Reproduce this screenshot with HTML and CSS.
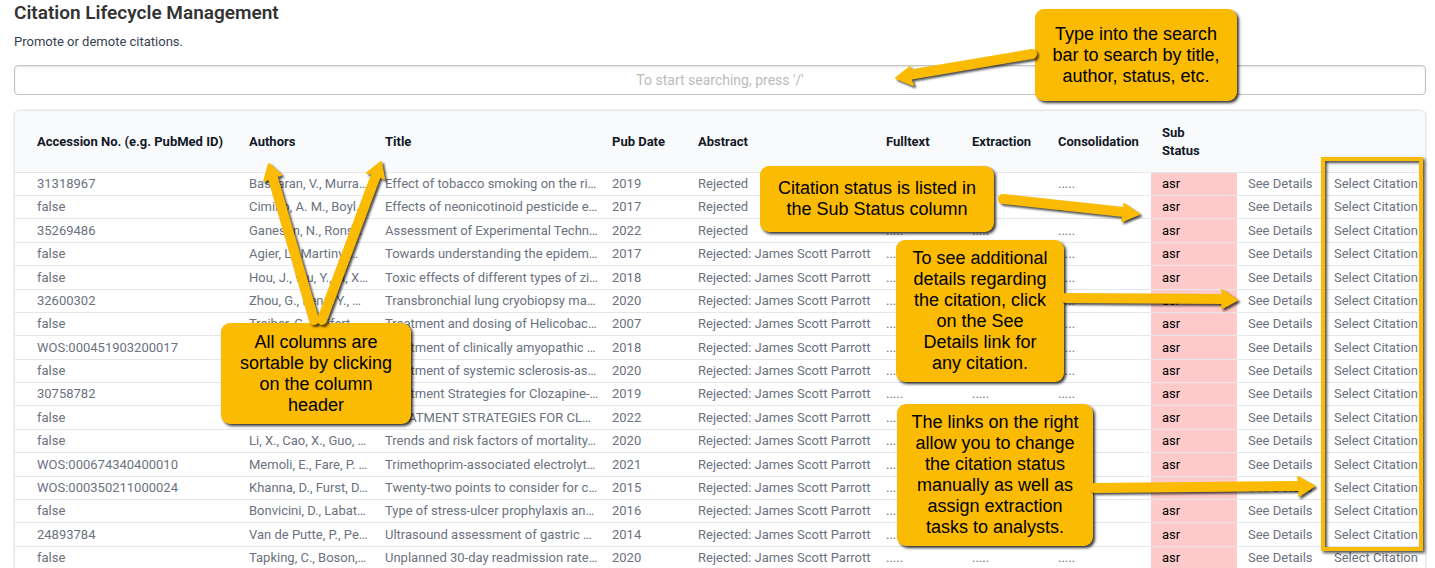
FILE: index.html
```html
<!DOCTYPE html>
<html lang="en">
<head>
<meta charset="utf-8">
<title>Citation Lifecycle Management</title>
<link rel="stylesheet" href="styles.css">
</head>
<body>
<main class="page">
  <h1 class="title">Citation Lifecycle Management</h1>
  <p class="subtitle">Promote or demote citations.</p>
  <input class="search" type="text" aria-label="Search citations" placeholder="To start searching, press '/'">
  <div class="panel">
    <table class="citations">
      <colgroup>
        <col class="col-accession"><col class="col-authors"><col class="col-title"><col class="col-small"><col class="col-abstract"><col class="col-small"><col class="col-small"><col class="col-consolidation"><col class="col-small"><col class="col-small"><col class="col-select">
      </colgroup>
      <thead>
        <tr><th>Accession No. (e.g. PubMed ID)</th><th>Authors</th><th>Title</th><th>Pub Date</th><th>Abstract</th><th>Fulltext</th><th>Extraction</th><th>Consolidation</th><th class="wrap">Sub Status</th><th></th><th></th></tr>
      </thead>
      <tbody id="rows"></tbody>
    </table>
  </div>

  <div class="highlight"></div>
  <div class="callout callout-search">Type into the search<br>bar to search by title,<br>author, status, etc.</div>
  <div class="callout callout-status">Citation status is listed in<br>the Sub Status column</div>
  <div class="callout callout-details">To see additional<br>details regarding<br>the citation, click<br>on the See<br>Details link for<br>any citation.</div>
  <div class="callout callout-links">The links on the right<br>allow you to change<br>the citation status<br>manually as well as<br>assign extraction<br>tasks to analysts.</div>
  <div class="callout callout-sort">All columns are<br>sortable by clicking<br>on the column<br>header</div>

  <svg class="arrows arrows-left" viewBox="0 0 440 568" aria-hidden="true">
    <g class="arrow"><path class="shaft" d="M314 320L273 178"/><path class="head" d="M269 164L264 181L272 177L281 175Z"/></g>
    <g class="arrow"><path class="shaft" d="M322 320L376 175"/><path class="head" d="M381 162L367 173L376 174L384 179Z"/></g>
  </svg>
  <svg class="arrows arrows-right" viewBox="860 0 575 568" aria-hidden="true">
    <g class="arrow"><path class="shaft" d="M1032 54L908 75"/><path class="head" d="M896 78L910 67L909 76L913 85Z"/></g>
    <g class="arrow"><path class="shaft" d="M1003 199L1124 212"/><path class="head" d="M1139 214L1124 204L1125 212L1122 221Z"/></g>
    <g class="arrow"><path class="shaft" d="M1066 298L1223 299"/><path class="head" d="M1237 300L1222 290L1223 299L1222 308Z"/></g>
    <g class="arrow"><path class="shaft" d="M1095 488L1300 486"/><path class="head" d="M1314 486L1298 477L1300 486L1299 496Z"/></g>
  </svg>
</main>
<script src="rows.js"></script>
</body>
</html>
```

FILE: rows.js
```js
const full = "Rejected: James Scott Parrott";
const citations = [
  ["31318967", "Baskaran, V., Murra…", "Effect of tobacco smoking on the ri…", "2019", "Rejected"],
  ["false", "Cimino, A. M., Boyl…", "Effects of neonicotinoid pesticide e…", "2017", "Rejected"],
  ["35269486", "Ganesan, N., Rons…", "Assessment of Experimental Techn…", "2022", "Rejected"],
  ["false", "Agier, L., Martiny, …", "Towards understanding the epidem…", "2017", full],
  ["false", "Hou, J., Wu, Y., Li, X…", "Toxic effects of different types of zi…", "2018", full],
  ["32600302", "Zhou, G., Feng, Y., …", "Transbronchial lung cryobiopsy ma…", "2020", full],
  ["false", "Treiber, G., Seifert, …", "Treatment and dosing of Helicobac…", "2007", full],
  ["WOS:000451903200017", "", "Treatment of clinically amyopathic …", "2018", full],
  ["false", "", "Treatment of systemic sclerosis-as…", "2020", full],
  ["30758782", "", "Treatment Strategies for Clozapine-…", "2019", full],
  ["false", "", "TREATMENT STRATEGIES FOR CL…", "2022", full],
  ["false", "Li, X., Cao, X., Guo, …", "Trends and risk factors of mortality…", "2020", full],
  ["WOS:000674340400010", "Memoli, E., Fare, P. …", "Trimethoprim-associated electrolyt…", "2021", full],
  ["WOS:000350211000024", "Khanna, D., Furst, D…", "Twenty-two points to consider for c…", "2015", full],
  ["false", "Bonvicini, D., Labat…", "Type of stress-ulcer prophylaxis an…", "2016", full],
  ["24893784", "Van de Putte, P., Pe…", "Ultrasound assessment of gastric …", "2014", full],
  ["false", "Tapking, C., Boson,…", "Unplanned 30-day readmission rate…", "2020", full]
];
document.getElementById("rows").innerHTML = citations.map(c =>
  "<tr>" + c.map(v => `<td>${v}</td>`).join("") +
  "<td>.....</td><td>.....</td><td>.....</td>" +
  '<td class="sub-status">asr</td>' +
  '<td><a href="#">See Details</a></td><td><a href="#">Select Citation</a></td></tr>'
).join("");
```

FILE: styles.css
```css
* { box-sizing: border-box; }
html { scrollbar-width: none; }
body {
  margin: 0;
  background: #fff;
  font-family: Roboto, "Liberation Sans", sans-serif;
  font-size: 13px;
  line-height: 18px;
  color: #374151;
}
.page { position: relative; padding: 0 9px 0 14px; }
.title {
  margin: 0;
  padding-top: 1px;
  font-size: 19px;
  line-height: 24px;
  font-weight: 600;
  color: #333;
}
.subtitle { margin: 8px 0 14px; }
.search {
  display: block;
  width: 100%;
  height: 30px;
  border: 1px solid #c4c4c4;
  border-radius: 4px;
  background: #fff;
  box-shadow: inset 0 1px 2px rgba(0, 0, 0, 0.12);
  font: 14px Roboto, "Liberation Sans", sans-serif;
  text-align: center;
  color: #333;
  appearance: none;
}
.search::placeholder { color: #bbb; }
.panel {
  margin-top: 15px;
  border: 1px solid #e5e7eb;
  border-radius: 6px 6px 0 0;
  box-shadow: 0 0 2px rgba(0, 0, 0, 0.18);
  overflow: hidden;
}
.citations {
  width: 100%;
  table-layout: fixed;
  border-collapse: separate;
  border-spacing: 0;
}
.col-accession { width: 223px; }
.col-authors { width: 136px; }
.col-small { width: 86px; }
.col-abstract { width: 188px; }
.col-consolidation { width: 104px; }
.col-select { width: 102px; }
.citations th {
  height: 61px;
  padding: 0 11px;
  background: #f9fafb;
  text-align: left;
  font-weight: 700;
  color: #111827;
  white-space: nowrap;
}
.citations th.wrap { white-space: normal; padding-right: 40px; }
.citations td {
  height: 23px;
  padding: 0 11px;
  border-top: 1px solid #e5e7eb;
  color: #6b7280;
  white-space: nowrap;
}
.citations tr:nth-child(8n+3) td,
.citations tr:nth-child(8n+5) td,
.citations tr:nth-child(8n) td { height: 24px; }
.citations th:first-child,
.citations td:first-child { padding-left: 22px; }
.citations .sub-status { background: #fecaca; color: #000; }
.citations a { color: inherit; text-decoration: none; }
.citations td:last-child { padding-right: 0; }

.highlight {
  position: absolute;
  top: 157px;
  right: 12px;
  width: 102px;
  height: 394px;
  border: 4px solid #fbbb03;
  box-shadow: 2px 2px 3px rgba(0, 0, 0, 0.7), inset 2px 2px 3px rgba(0, 0, 0, 0.7);
}
.callout {
  position: absolute;
  display: flex;
  align-items: center;
  justify-content: center;
  border-radius: 9px;
  background: #fbbb03;
  box-shadow: 2px 2px 3px rgba(0, 0, 0, 0.8);
  font-family: "Liberation Sans", Arial, sans-serif;
  font-size: 18px;
  line-height: 21px;
  text-align: center;
  white-space: nowrap;
  color: #000;
}
.callout-search { top: 9px; right: 198px; width: 202px; height: 92px; }
.callout-status { top: 166px; right: 441px; width: 234px; height: 66px; }
.callout-details { top: 240px; right: 371px; width: 168px; height: 142px; }
.callout-links { top: 404px; right: 342px; width: 196px; height: 142px; }
.callout-sort { top: 323px; left: 221px; width: 190px; height: 101px; }
.arrows { position: absolute; top: 0; height: 568px; pointer-events: none; }
.arrows-left { left: 0; width: 440px; }
.arrows-right { right: 0; width: 575px; }
.arrow { filter: drop-shadow(2px 2px 1px rgba(0, 0, 0, 0.7)); }
.shaft { fill: none; stroke: #fbbb03; stroke-width: 10; stroke-linecap: round; }
.head { fill: #fbbb03; stroke: #fbbb03; stroke-width: 2; stroke-linejoin: round; }
```
